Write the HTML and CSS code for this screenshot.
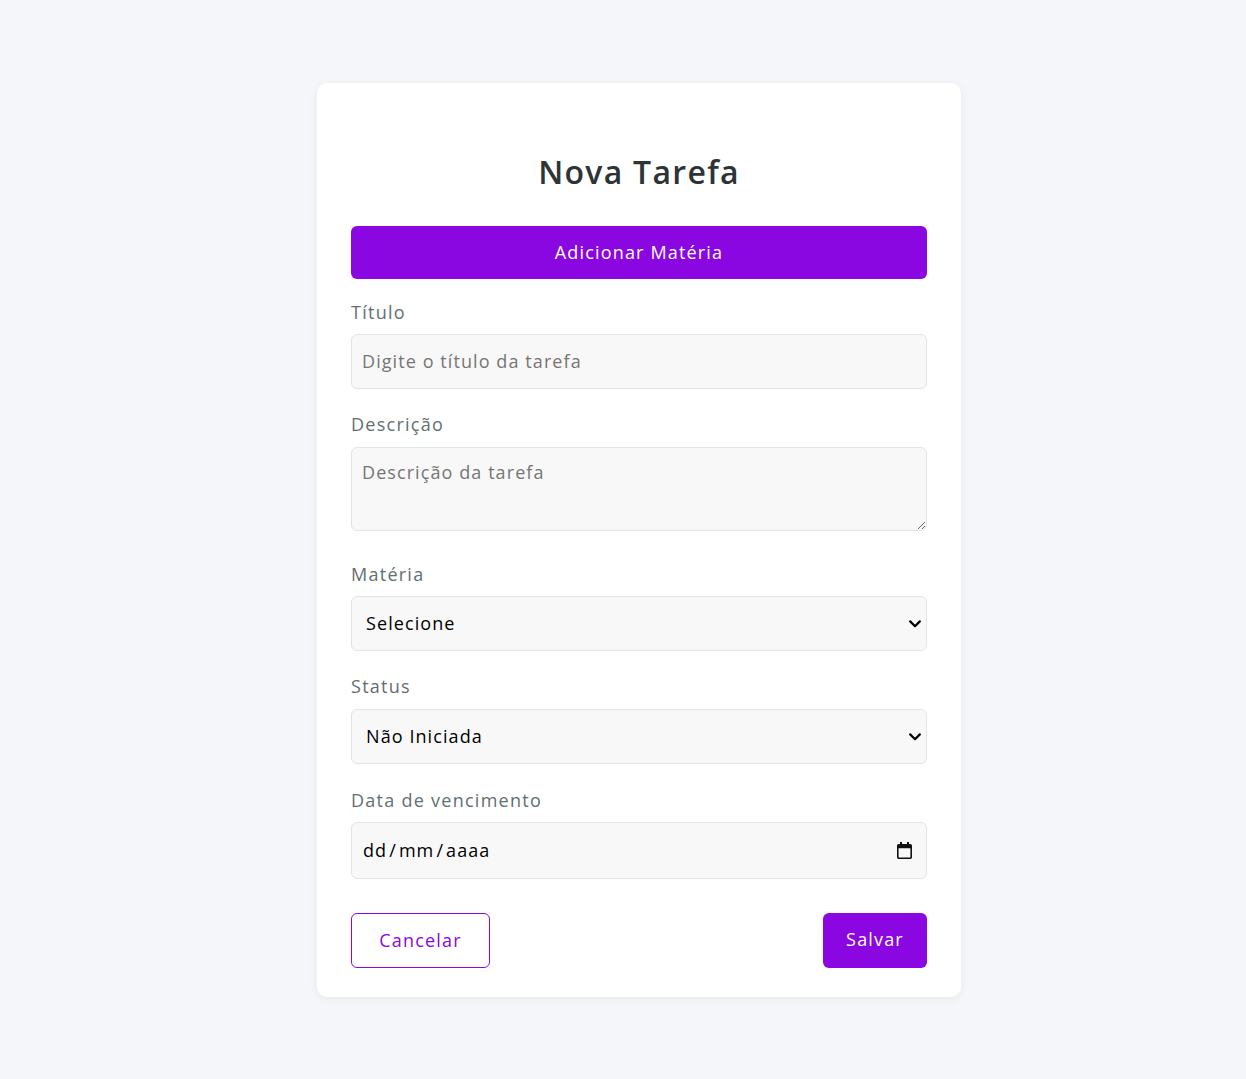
FILE: index.html
```html
<!DOCTYPE html>
<html lang="pt-BR">
<head>
<meta charset="utf-8">
<title>Nova Tarefa</title>
<link rel="stylesheet" href="styles.css">
</head>
<body>
<main class="page">
  <form class="card">
    <h2 class="title">Nova Tarefa</h2>
    <button type="button" class="btn-primary btn-wide">Adicionar Matéria</button>
    <div class="group">
      <label class="label" for="titulo">Título</label>
      <input class="field" id="titulo" type="text" placeholder="Digite o título da tarefa">
    </div>
    <div class="group">
      <label class="label label-desc" for="desc">Descrição</label>
      <textarea class="field area" id="desc" placeholder="Descrição da tarefa"></textarea>
    </div>
    <div class="group">
      <label class="label" for="materia">Matéria</label>
      <div class="select-wrap">
        <select class="field select" id="materia">
          <option>Selecione</option>
        </select>
        <svg class="chev" width="12" height="8" viewBox="0 0 12 8" aria-hidden="true">
          <path d="M1.2 1.4L6 6.2l4.8-4.8" fill="none" stroke="#000" stroke-width="2.2" stroke-linecap="round" stroke-linejoin="round"/>
        </svg>
      </div>
    </div>
    <div class="group group-status">
      <label class="label label-status" for="status">Status</label>
      <div class="select-wrap">
        <select class="field select" id="status">
          <option>Não Iniciada</option>
          <option>Em Andamento</option>
          <option>Concluída</option>
        </select>
        <svg class="chev" width="12" height="8" viewBox="0 0 12 8" aria-hidden="true">
          <path d="M1.2 1.4L6 6.2l4.8-4.8" fill="none" stroke="#000" stroke-width="2.2" stroke-linecap="round" stroke-linejoin="round"/>
        </svg>
      </div>
    </div>
    <div class="group">
      <label class="label" for="data">Data de vencimento</label>
      <div class="field date" id="data" role="textbox" tabindex="0">
        <span class="date-text">dd<span class="sep">/</span>mm<span class="sep">/</span>aaaa</span>
        <svg class="cal" width="15" height="17" viewBox="0 0 15 17" aria-hidden="true">
          <path d="M3 0h2v2h5V0h2v2h1.2C14.2 2 15 2.8 15 3.8v11.4c0 1-.8 1.8-1.8 1.8H1.8C.8 17 0 16.2 0 15.2V3.8C0 2.8.8 2 1.8 2H3V0zM1.6 6.2v9.2h11.8V6.2H1.6z" fill="#111"/>
        </svg>
      </div>
    </div>
    <div class="actions">
      <button type="button" class="btn-outline">Cancelar</button>
      <button type="submit" class="btn-primary btn-save">Salvar</button>
    </div>
  </form>
</main>
</body>
</html>
```
FILE: styles.css
```css
* { box-sizing: border-box; }
html, body {
  margin: 0;
  padding: 0;
  background: #f5f6fa;
  font-family: "Open Sans", "Liberation Sans", sans-serif;
}
.page {
  display: flex;
  justify-content: center;
  align-items: flex-start;
  padding-top: 83px;
  padding-left: 32px;
  min-height: 1079px;
}
.card {
  width: 644px;
  background: #ffffff;
  border-radius: 10px;
  box-shadow: 0 2px 10px rgba(0, 0, 0, 0.06);
  padding: 34px 34px 29px;
  display: flex;
  flex-direction: column;
}
.title {
  margin: 31px 0 30px;
  font-size: 32px;
  line-height: 47px;
  font-weight: 600;
  color: #2d3436;
  text-align: center;
  letter-spacing: 0.04em;
  padding-bottom: 1px;
}
.btn-primary {
  background: #8a07e2;
  color: #ffffff;
  border: none;
  border-radius: 6px;
  font-family: inherit;
  font-size: 18px;
  letter-spacing: 0.065em;
  padding: 0 0 2px;
  cursor: pointer;
}
.btn-wide {
  height: 53px;
  width: 100%;
  margin-bottom: 20px;
}
.group {
  display: flex;
  flex-direction: column;
  margin-bottom: 22px;
}
.group-status { margin-bottom: 23px; }
.label {
  font-size: 18px;
  line-height: 27px;
  color: #636e72;
  margin-bottom: 8px;
  letter-spacing: 0.07em;
}
.label-desc, .label-status { margin-bottom: 9px; }
.field {
  display: block;
  width: 100%;
  height: 55px;
  background: #f8f8f8;
  border: 1px solid #dfe6e9;
  border-radius: 6px;
  padding: 0 10px 2px;
  font-family: inherit;
  font-size: 18px;
  letter-spacing: 0.06em;
  color: #000000;
}
.field::placeholder { color: #757575; }
.area {
  height: 84px;
  padding: 12px 10px;
  resize: vertical;
  margin-bottom: 8px;
}
.select-wrap { position: relative; }
.select {
  appearance: none;
  -webkit-appearance: none;
  padding: 0 36px 2px 14px;
  cursor: pointer;
}
.chev {
  position: absolute;
  right: 6px;
  top: 24px;
  pointer-events: none;
}
.date {
  height: 57px;
  padding: 0 14px 2px 11px;
  display: flex;
  align-items: center;
  justify-content: space-between;
}
.sep { margin: 0 2px; }
.cal { display: block; margin-top: 2px; }
.actions {
  display: flex;
  justify-content: space-between;
  margin-top: 12px;
}
.btn-outline {
  width: 139px;
  height: 55px;
  background: #ffffff;
  color: #8a07e2;
  border: 1px solid #8a07e2;
  border-radius: 6px;
  font-family: inherit;
  font-size: 18px;
  letter-spacing: 0.065em;
  padding: 0 0 2px;
  cursor: pointer;
}
.btn-save {
  width: 104px;
  height: 55px;
  padding-bottom: 4px;
}
```
